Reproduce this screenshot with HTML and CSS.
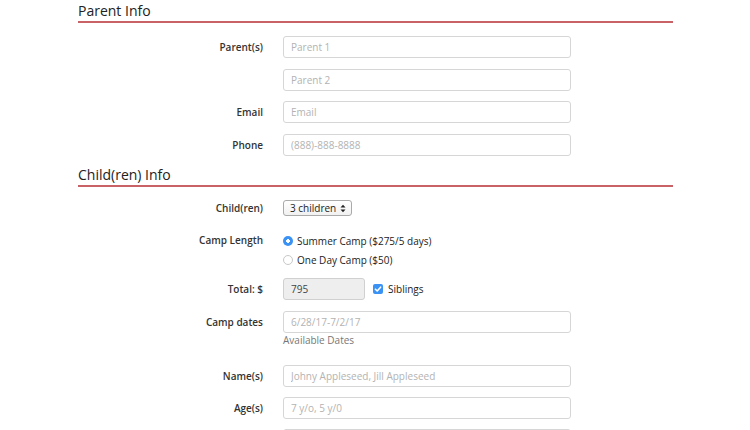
FILE: index.html
```html
<!DOCTYPE html>
<html>
<head>
<meta charset="utf-8">
<link rel="stylesheet" href="styles.css">
</head>
<body>
<div class="form">
  <h2 class="section-title">Parent Info</h2>
  <div class="section parent-section">
    <div class="row"><label class="lbl">Parent(s)</label><input class="txt" placeholder="Parent 1"></div>
    <div class="row gap"><span class="lbl"></span><input class="txt" placeholder="Parent 2"></div>
    <div class="row gap"><label class="lbl">Email</label><input class="txt" placeholder="Email"></div>
    <div class="row gap"><label class="lbl">Phone</label><input class="txt" placeholder="(888)-888-8888"></div>
  </div>

  <h2 class="section-title second">Child(ren) Info</h2>
  <div class="section">
    <div class="row row-select">
      <label class="lbl">Child(ren)</label>
      <span class="select">3 children
        <svg class="arrows" width="6" height="9" viewBox="0 0 6 9"><path d="M0.5 3.5 L3 0.8 L5.5 3.5 Z M0.5 5.5 L3 8.2 L5.5 5.5 Z" fill="#222"/></svg>
      </span>
    </div>
    <div class="row row-radio">
      <label class="lbl lbl-top">Camp Length</label>
      <div class="radios">
        <div class="opt"><span class="radio on"></span>Summer Camp ($275/5 days)</div>
        <div class="opt"><span class="radio"></span>One Day Camp ($50)</div>
      </div>
    </div>
    <div class="row row-total">
      <label class="lbl">Total: $</label>
      <div class="total-wrap">
        <input class="txt total" value="795" readonly>
        <span class="check"><svg width="10" height="10" viewBox="0 0 10 10"><path d="M2.4 5.2 L4.2 7 L7.6 3.2" fill="none" stroke="#fff" stroke-width="1.6" stroke-linecap="round" stroke-linejoin="round"/></svg></span>
        <span class="check-text">Siblings</span>
      </div>
    </div>
    <div class="row row-dates">
      <label class="lbl">Camp dates</label>
      <input class="txt" placeholder="6/28/17-7/2/17">
    </div>
    <div class="row"><span class="lbl"></span><span class="help">Available Dates</span></div>
    <div class="row row-names"><label class="lbl">Name(s)</label><input class="txt" placeholder="Johny Appleseed, Jill Appleseed"></div>
    <div class="row gap-age"><label class="lbl">Age(s)</label><input class="txt" placeholder="7 y/o, 5 y/0"></div>
    <div class="row gap-age"><label class="lbl"></label><input class="txt" placeholder=""></div>
  </div>
</div>
</body>
</html>
```

FILE: styles.css
```css
html, body {
  margin: 0;
  padding: 0;
  background: #fff;
}
body {
  font-family: "Open Sans", "Liberation Sans", sans-serif;
  color: #333;
  overflow: hidden;
  height: 430px;
}
.form {
  margin-left: 78px;
  width: 595px;
}
.section-title {
  margin: 0;
  padding: 2px 0 1px 0;
  font-size: 14px;
  line-height: 18px;
  font-weight: 500;
  color: #222;
  border-bottom: 2px solid #c96266;
}
.section-title.second {
  margin-top: 8px;
}
.section {
  padding-top: 13px;
}
.row {
  display: grid;
  grid-template-columns: 185px 288px;
  column-gap: 20px;
  align-items: center;
}
.gap { margin-top: 10.5px; }
.lbl {
  text-align: right;
  font-size: 10px;
  font-weight: 600;
  color: #333;
}
.lbl-top {
  align-self: start;
  line-height: 19px;
}
.txt {
  box-sizing: border-box;
  height: 22px;
  width: 288px;
  border: 1px solid #d6d6d6;
  border-radius: 3px;
  padding: 0 0 0 7px;
  font-family: "Open Sans", "Liberation Sans", sans-serif;
  font-size: 10px;
  color: #555;
  background: #fff;
  outline: none;
}
.txt::placeholder {
  color: #b3b3b3;
}
.row-select .select {
  position: relative;
  box-sizing: border-box;
  width: 69px;
  height: 16px;
  border: 1px solid #aaa;
  border-radius: 3px;
  background: linear-gradient(#fff, #f1f1f1);
  font-size: 10px;
  line-height: 14px;
  padding-left: 6px;
  color: #222;
  font-weight: 500;
}
.arrows {
  position: absolute;
  right: 5px;
  top: 3px;
}
.row-radio {
  margin-top: 15.5px;
}
.radios {
  font-size: 10px;
  font-weight: 500;
  color: #222;
}
.opt {
  display: flex;
  align-items: center;
  height: 19px;
}
.radio {
  box-sizing: border-box;
  width: 10px;
  height: 10px;
  border-radius: 50%;
  border: 1px solid #c8c8c8;
  background: #fff;
  margin: 0 4px 0 0;
}
.radio.on {
  border: none;
  background: radial-gradient(circle, #fff 0 1.6px, #3a92f5 2.1px);
}
.row-total {
  margin-top: 8.5px;
}
.total-wrap {
  display: flex;
  align-items: center;
}
.txt.total {
  width: 82px;
  background: #eeeeee;
  border-color: #d0d0d0;
  color: #444;
}
.check {
  display: inline-flex;
  width: 10px;
  height: 10px;
  border-radius: 2px;
  background: #3a92f5;
  margin-left: 8px;
}
.check-text {
  font-size: 10px;
  font-weight: 500;
  color: #222;
  margin-left: 5px;
}
.row-dates {
  margin-top: 11px;
}
.help {
  font-size: 10px;
  color: #777;
  line-height: 14px;
}
.row-names {
  margin-top: 18px;
}
.gap-age {
  margin-top: 10px;
}
```
